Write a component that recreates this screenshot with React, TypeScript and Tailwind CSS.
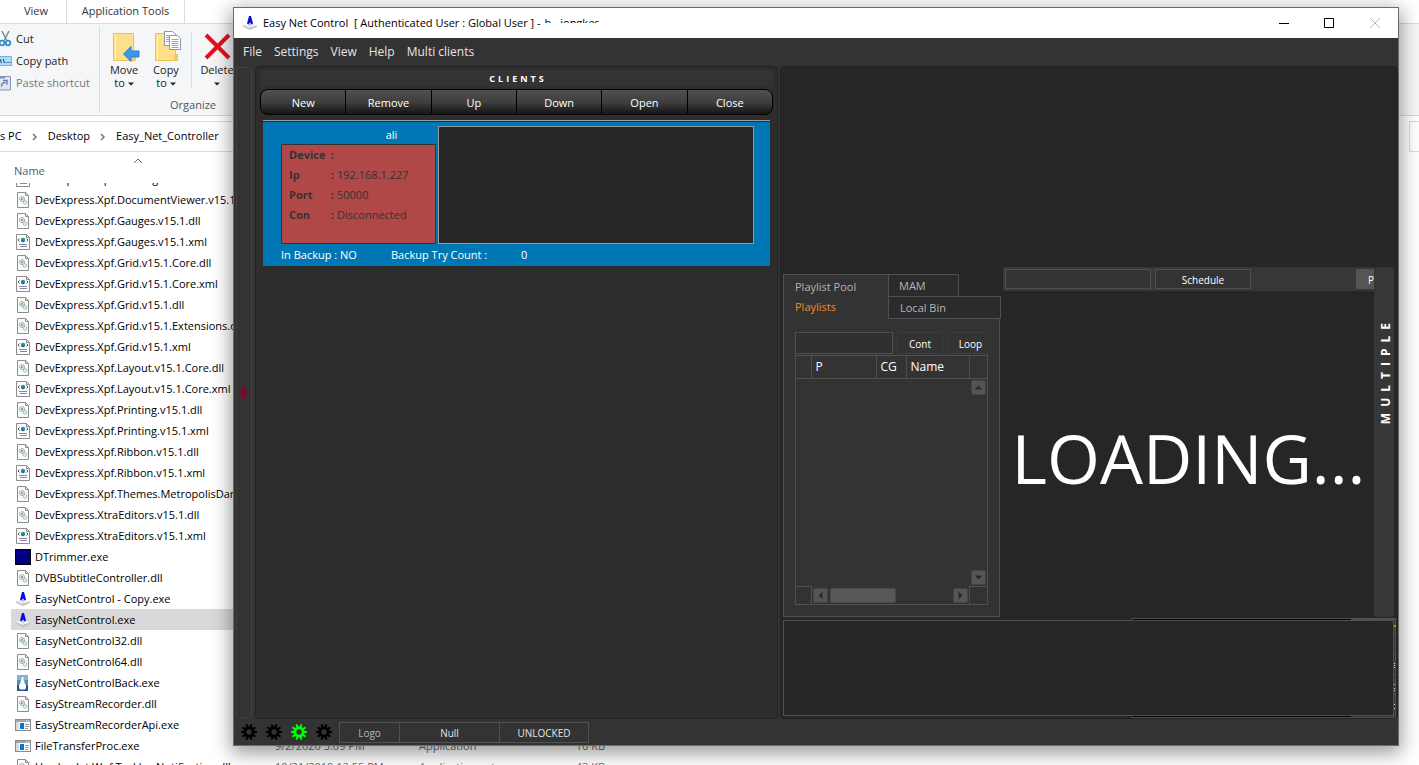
import type { ReactNode } from 'react'

type FileKind = 'dll' | 'xml' | 'trimmer' | 'cone' | 'backup' | 'app'

interface FileEntry {
  name: string
  kind: FileKind
  selected?: boolean
  date?: string
  type?: string
  size?: string
}

const files: FileEntry[] = [
  { name: 'DevExpress.Xpf.Docking.v15.1.xml', kind: 'xml' },
  { name: 'DevExpress.Xpf.DocumentViewer.v15.1.Core.dll', kind: 'dll' },
  { name: 'DevExpress.Xpf.Gauges.v15.1.dll', kind: 'dll' },
  { name: 'DevExpress.Xpf.Gauges.v15.1.xml', kind: 'xml' },
  { name: 'DevExpress.Xpf.Grid.v15.1.Core.dll', kind: 'dll' },
  { name: 'DevExpress.Xpf.Grid.v15.1.Core.xml', kind: 'xml' },
  { name: 'DevExpress.Xpf.Grid.v15.1.dll', kind: 'dll' },
  { name: 'DevExpress.Xpf.Grid.v15.1.Extensions.dll', kind: 'dll' },
  { name: 'DevExpress.Xpf.Grid.v15.1.xml', kind: 'xml' },
  { name: 'DevExpress.Xpf.Layout.v15.1.Core.dll', kind: 'dll' },
  { name: 'DevExpress.Xpf.Layout.v15.1.Core.xml', kind: 'xml' },
  { name: 'DevExpress.Xpf.Printing.v15.1.dll', kind: 'dll' },
  { name: 'DevExpress.Xpf.Printing.v15.1.xml', kind: 'xml' },
  { name: 'DevExpress.Xpf.Ribbon.v15.1.dll', kind: 'dll' },
  { name: 'DevExpress.Xpf.Ribbon.v15.1.xml', kind: 'xml' },
  { name: 'DevExpress.Xpf.Themes.MetropolisDark.v15.1.dll', kind: 'dll' },
  { name: 'DevExpress.XtraEditors.v15.1.dll', kind: 'dll' },
  { name: 'DevExpress.XtraEditors.v15.1.xml', kind: 'xml' },
  { name: 'DTrimmer.exe', kind: 'trimmer' },
  { name: 'DVBSubtitleController.dll', kind: 'dll' },
  { name: 'EasyNetControl - Copy.exe', kind: 'cone' },
  { name: 'EasyNetControl.exe', kind: 'cone', selected: true },
  { name: 'EasyNetControl32.dll', kind: 'dll' },
  { name: 'EasyNetControl64.dll', kind: 'dll' },
  { name: 'EasyNetControlBack.exe', kind: 'backup' },
  { name: 'EasyStreamRecorder.dll', kind: 'dll' },
  { name: 'EasyStreamRecorderApi.exe', kind: 'app' },
  {
    name: 'FileTransferProc.exe',
    kind: 'app',
    date: '9/2/2020 3:09 PM',
    type: 'Application',
    size: '16 KB',
  },
  {
    name: 'Hardcodet.Wpf.TaskbarNotification.dll',
    kind: 'dll',
    date: '10/21/2019 12:55 PM',
    type: 'Application ext...',
    size: '43 KB',
  },
]

function ConeIcon() {
  return (
    <svg width="16" height="16" viewBox="0 0 16 16" className="shrink-0">
      <path d="M0.500 10 6 8l9.500 2.500L8 14.500z" fill="#efefef" />
      <path d="M0.500 10 7 13l8.500-2.500-1 1.500L8 15 1.500 12z" fill="#bdbdbd" />
      <path d="M7 1h2l2 7.500-1.500 1H6.500l-1.500-1z" fill="#0a0ae6" />
      <path d="M6.500 9.500 8 7.500l1.500 2z" fill="#f7f7f7" />
      <path d="M7.500 9.500h1v4h-1z" fill="#d8d8d8" />
    </svg>
  )
}

function FileIcon({ kind }: { kind: FileKind }) {
  if (kind === 'cone') return <ConeIcon />
  if (kind === 'trimmer') {
    return (
      <svg width="16" height="16" viewBox="0 0 16 16" className="shrink-0">
        <rect x=".5" y=".5" width="15" height="15" fill="#000080" stroke="#000" />
      </svg>
    )
  }
  if (kind === 'backup') {
    return (
      <svg width="16" height="16" viewBox="0 0 16 16" className="shrink-0">
        <rect x="2" width="11" height="6" fill="#7db6d3" />
        <rect x="2" y="5" width="11" height="6" fill="#4f8db5" />
        <rect x="2" y="10" width="11" height="6" fill="#24588a" />
        <path d="M6.500 2h2v3l1 1v2l1.500 2v3l-1 1.500H5L4 13v-3l1.500-2V6l1-1z" fill="#fff" />
      </svg>
    )
  }
  if (kind === 'app') {
    return (
      <svg width="16" height="16" viewBox="0 0 16 16" className="shrink-0">
        <rect x=".5" y="2.500" width="15" height="11" fill="#fff" stroke="#8a8a8a" />
        <path d="M1 3h14v2H1z" fill="#a5a5a5" />
        <path d="M1 5h3v8H1z" fill="#d9d9d9" />
        <path d="M5 6h4v6H5z" fill="#0078d7" />
        <path d="M10 7.500h4M10 9.500h4M10 11.500h3" stroke="#9a9a9a" />
        <path d="M11 4h1M13 4h1" stroke="#fff" />
      </svg>
    )
  }
  if (kind === 'xml') {
    return (
      <svg width="16" height="16" viewBox="0 0 16 16" className="shrink-0">
        <path d="M1.500.5h10l3 3v12h-13z" fill="#fcfcfc" stroke="#8d8d8d" />
        <path d="M11.500.5v3h3" fill="none" stroke="#8d8d8d" />
        <path d="M4.500 4.500 3 6l1.500 1.500M11.500 4.500 13 6l-1.500 1.500" fill="none" stroke="#555" />
        <circle cx="8" cy="6" r="2.200" fill="#1f9b8d" />
        <path d="M6 6.500 8 8.200l2-1.700z" fill="#235a9c" />
        <path d="M4 10.500h8M5 12.500h7" stroke="#8c84a8" />
      </svg>
    )
  }
  return (
    <svg width="16" height="16" viewBox="0 0 16 16" className="shrink-0">
      <path d="M2.500.5h8l3 3v12h-11z" fill="#fcfcfc" stroke="#8d8d8d" />
      <path d="M10.500.5v3h3" fill="none" stroke="#8d8d8d" />
      <circle cx="7" cy="7" r="2.500" fill="#e8e8e8" stroke="#8f8f8f" strokeDasharray="1.500 .6" />
      <circle cx="7" cy="7" r=".9" fill="#777" />
      <circle cx="10" cy="10.500" r="2" fill="#d4e9f5" stroke="#7fb3d4" strokeDasharray="1.300 .6" />
    </svg>
  )
}

function Caret() {
  return (
    <svg width="6" height="4" viewBox="0 0 6 4" className="inline-block">
      <path d="M0 .5h6L3 3.500z" fill="#222" />
    </svg>
  )
}

function FolderIcon({ copy }: { copy?: boolean }) {
  return (
    <svg width="32" height="32" viewBox="-4 0 32 32">
      <path d="M1.500 2.500h20v21h2v6h-22z" fill="#ffe08a" stroke="#ecc455" />
      <path d="M3.500 3v26" stroke="#fff0bf" />
      <path d="M20 23.500h3.500v6H20z" fill="#f3cd5b" />
      {copy ? (
        <g fill="#fff" stroke="#8a98a8">
          <path d="M10.500.5h8l3 3v11h-11z" />
          <path d="M15.500 4.500h8l3 3v11h-11z" />
          <path
            d="M17.500 8.500h7M17.500 10.500h7M17.500 12.500h7M17.500 14.500h7M17.500 16.500h7M12 4.500h3M12 6.500h3M12 8.500h3M12 10.500h3"
            stroke="#7aa7dc"
          />
        </g>
      ) : (
        <path d="M11.500 23 19 15.500v4.500h8v6h-8v4.500z" fill="#3b97e8" stroke="#2d7fd0" />
      )}
    </svg>
  )
}

function BigAction({ icon, children }: { icon: ReactNode; children: ReactNode }) {
  return (
    <button className="flex w-[42px] flex-col items-center pt-[7px] text-[11px] leading-[13px] text-[#222]">
      {icon}
      <span className="text-center">{children}</span>
    </button>
  )
}

function Ribbon() {
  return (
    <div className="flex h-[92px] shrink-0 border-b border-[#d5d8db] bg-[#f5f6f7] text-[11px] text-[#222]">
      <div className="flex w-[99px] flex-col pt-1">
        <button className="flex h-[22px] items-center gap-1">
          <svg width="12" height="18" viewBox="0 0 12 18">
            <path d="M9 1 4 11M2 1l5 10" stroke="#7c8b97" strokeWidth="1.500" />
            <circle cx="2" cy="13" r="2.300" fill="none" stroke="#2b8fd0" strokeWidth="1.700" />
            <circle cx="8" cy="13" r="2.300" fill="none" stroke="#2b8fd0" strokeWidth="1.700" />
          </svg>
          Cut
        </button>
        <button className="flex h-[22px] items-center gap-1">
          <svg width="12" height="10" viewBox="0 0 12 10">
            <rect x="-4" y=".5" width="15.500" height="9" fill="#a9dcf9" stroke="#72b4dc" />
            <path d="M0 3l1.500 4M3 3l1.500 4M5.500 6.500h1M7.500 6.500h1M9.500 6.500h1" stroke="#174a6e" />
          </svg>
          Copy path
        </button>
        <button className="flex h-[22px] items-center gap-1 text-[#777]" disabled>
          <svg width="12" height="16" viewBox="0 0 12 16">
            <path d="M-4 1.500h14.500v13.500H-4z" fill="#dfe5f1" stroke="#8495b5" />
            <path d="M-1 1h6v2.500h-6z" fill="#8495b5" />
            <path d="M1.500 11.500c0-3 1-4 4-4M3 5.500h4v4" fill="none" stroke="#6c82ac" strokeWidth="1.500" />
          </svg>
          Paste shortcut
        </button>
      </div>
      <div className="my-0.5 w-px bg-[#dcdfe2]" />
      <div className="flex flex-col">
        <div className="flex h-[73px] pl-[3px]">
          <BigAction icon={<FolderIcon />}>
            Move
            <br />
            to <Caret />
          </BigAction>
          <BigAction icon={<FolderIcon copy />}>
            Copy
            <br />
            to <Caret />
          </BigAction>
          <div className="mx-1 mt-2 h-14 w-px bg-[#dcdfe2]" />
          <BigAction
            icon={
              <svg width="32" height="32" viewBox="0 0 32 32">
                <path d="M5 4l23 23M28 4 5 27" stroke="#e80f1c" strokeWidth="4" />
              </svg>
            }
          >
            Delete
            <br />
            <Caret />
          </BigAction>
        </div>
        <span className="pl-[70px] text-[#555]">Organize</span>
      </div>
    </div>
  )
}

function Chevron() {
  return (
    <svg width="6" height="8" viewBox="0 0 6 8" className="mx-2.5">
      <path d="M1 1l3 3-3 3" fill="none" stroke="#777" strokeWidth="1.500" />
    </svg>
  )
}

function Explorer() {
  return (
    <div className="flex h-full flex-col bg-white text-[11px] text-black">
      <div className="flex h-6 shrink-0 border-b border-[#dadbdc] text-[#333]">
        <button className="w-[67px] border-r border-[#dadbdc] pl-1.5">View</button>
        <button className="w-[118px] border-r border-[#dadbdc]">Application Tools</button>
      </div>
      <Ribbon />
      <div className="mt-[5px] flex h-[31px] shrink-0">
        <nav className="mr-3 flex flex-1 items-center border-y border-r border-[#d9d9d9]">
          <a href="#pc">s PC</a>
          <Chevron />
          <a href="#desktop">Desktop</a>
          <Chevron />
          <a href="#controller">Easy_Net_Controller</a>
        </nav>
        <div className="w-2.5 border-y border-l border-[#d9d9d9]" />
      </div>
      <div className="flex h-[31px] shrink-0 flex-col pl-3.5">
        <svg width="10" height="6" viewBox="0 0 10 6" className="mt-1.5 ml-[119px]">
          <path d="M1 5l4-4 4 4" fill="none" stroke="#666" />
        </svg>
        <span className="leading-[14px] text-[#44607f]">Name</span>
      </div>
      {/* File list, scrolled part way through a row */}
      <ul className="flex min-h-0 flex-1 flex-col overflow-hidden">
        {files.map((f, i) => (
          <li
            key={f.name}
            className={
              'ml-[11px] flex h-[21px] w-[640px] shrink-0 items-center pl-1 whitespace-nowrap ' +
              (f.selected ? 'bg-[#d9d9d9] ' : '') +
              (i === 0 ? '-mt-[15px]' : '')
            }
          >
            <FileIcon kind={f.kind} />
            <span className="w-[240px] pt-px pl-1">{f.name}</span>
            {f.date && (
              <>
                <span className="w-[144px] pt-px pl-1 text-[#6d6d6d]">{f.date}</span>
                <span className="w-[110px] pt-px pl-1 text-[#6d6d6d]">{f.type}</span>
                <span className="w-20 pt-px text-right text-[#6d6d6d]">{f.size}</span>
              </>
            )}
          </li>
        ))}
      </ul>
    </div>
  )
}

function TitleBar() {
  return (
    <div className="flex h-[30px] shrink-0 items-center bg-white pl-2 text-black">
      <ConeIcon />
      <h1 className="ml-[5px] flex gap-1 text-[11px] leading-4 whitespace-pre">
        <span>Easy Net Control  [ Authenticated User : Global User ] -</span>
        <span className="flex h-2 gap-1.5 overflow-hidden">
          <span>b.</span>
          <span>jongkes</span>
        </span>
      </h1>
      <div className="ml-auto flex">
        <button aria-label="Minimize" className="flex h-7 w-[45px] items-center justify-center">
          <svg width="10" height="10" viewBox="0 0 10 10">
            <path d="M0 5.500h10" stroke="#000" />
          </svg>
        </button>
        <button aria-label="Maximize" className="flex h-7 w-[45px] items-center justify-center">
          <svg width="10" height="10" viewBox="0 0 10 10">
            <path d="M.5.5h9v9h-9z" fill="none" stroke="#000" />
          </svg>
        </button>
        <button aria-label="Close window" className="flex h-7 w-[47px] items-center justify-center">
          <svg width="10" height="10" viewBox="0 0 10 10">
            <path d="M0 0l10 10M10 0 0 10" stroke="#bbb" />
          </svg>
        </button>
      </div>
    </div>
  )
}

const menus = ['File', 'Settings', 'View', 'Help', 'Multi clients']
const clientActions = ['New', 'Remove', 'Up', 'Down', 'Open', 'Close']
const details = [
  ['Device', ''],
  ['Ip', '192.168.1.227'],
  ['Port', '50000'],
  ['Con', 'Disconnected'],
]

function ClientsPanel() {
  return (
    <section className="flex w-[523px] shrink-0 flex-col rounded-sm border border-[#222] bg-[#2d2d2d] px-1 pt-[3px]">
      <h2 className="h-[17px] bg-[#333] pl-[3px] text-center text-[9px] leading-[17px] font-bold tracking-[3px] text-white">
        CLIENTS
      </h2>
      <div className="mt-0.5 flex h-[26px] overflow-hidden rounded-lg border border-black bg-black">
        {clientActions.map((label) => (
          <button
            key={label}
            className="flex-1 border-r border-black bg-linear-to-b from-[#505050] via-[#3f3f3f] to-[#161616] pt-0.5 text-[11px] text-white last:border-r-0"
          >
            {label}
          </button>
        ))}
      </div>
      <div className="mx-[3px] mt-[5px] border-t border-[#999] pt-px">
        <div className="bg-[#0077b5] text-[11px] text-white">
          <div className="flex pt-1 pr-4 pl-[18px]">
            <div className="w-[157px]">
              <p className="h-[18px] pl-16 text-center leading-[18px]">ali</p>
              <dl className="h-[100px] w-[155px] border border-[#333] bg-[#b04848] pl-[7px] text-[#333]">
                {details.map(([k, v]) => (
                  <div key={k} className="flex h-5 items-center">
                    <dt className="flex w-[45px] justify-between font-bold">
                      {k} <span>:</span>
                    </dt>
                    <dd className="pl-[3px]">{v}</dd>
                  </div>
                ))}
              </dl>
            </div>
            <div className="flex-1 border border-[#999] bg-[#262626]" />
          </div>
          <div className="flex h-[22px] items-center pl-[18px]">
            <span className="w-[110px]">In Backup : NO</span>
            <span className="w-[130px]">Backup Try Count :</span>
            <span>0</span>
          </div>
        </div>
      </div>
    </section>
  )
}

function ScrollArrow({ label, d }: { label: string; d: string }) {
  return (
    <button aria-label={label} className="h-[15px] w-[15px] shrink-0 rounded-xs border border-[#444] bg-[#555]">
      <svg width="13" height="13" viewBox="0 0 13 13">
        <path d={d} fill="#2b2b2b" />
      </svg>
    </button>
  )
}

function PlaylistPanel() {
  return (
    <section className="mt-[7px] flex w-[218px] shrink-0 flex-col text-[#b5b5b5]">
      <div className="flex h-[45px] text-[11px]">
        <div className="flex w-[105px] shrink-0 flex-col items-start border-t border-l border-[#505050] bg-[#333] pt-0.5 pl-[11px] leading-5">
          <button>Playlist Pool</button>
          <button className="text-[#f58a1f]">Playlists</button>
        </div>
        <div className="flex flex-1 flex-col">
          <button className="h-[22px] w-[71px] border-x border-t border-[#505050] bg-[#2b2b2b] pt-0.5 pl-2.5 text-left">
            MAM
          </button>
          <button className="h-[23px] border border-[#505050] bg-[#2b2b2b] pt-0.5 pl-[11px] text-left">Local Bin</button>
        </div>
      </div>
      <div className="mr-px flex flex-1 flex-col border-x border-b border-[#505050] bg-[#333] px-[11px] pt-[13px] pb-[11px]">
        <div className="flex h-[22px] overflow-hidden text-[10px] text-white">
          <input aria-label="Playlist filter" className="w-[98px] shrink-0 border border-[#505050] bg-[#2f2f2f] px-1" />
          <button className="ml-1 w-[46px] shrink-0 rounded-xs border border-[#3d3d3d] pt-0.5">Cont</button>
          <button className="ml-1 w-[47px] shrink-0 rounded-xs border border-[#3d3d3d] pt-0.5">Loop</button>
        </div>
        <div className="mt-px flex flex-1 flex-col border border-[#505050]">
          <table className="w-full table-fixed border-collapse text-left text-xs text-white">
            <thead>
              <tr className="h-[22px] border-b border-[#505050]">
                <th className="w-[15px] border-r border-[#505050]" />
                <th className="w-[65px] border-r border-[#505050] pl-1 font-normal">P</th>
                <th className="w-[30px] border-r border-[#505050] pl-1 font-normal">CG</th>
                <th className="border-r border-[#505050] pl-1 font-normal">Name</th>
                <th className="w-[18px]" />
              </tr>
            </thead>
          </table>
          <div className="flex flex-1 flex-col items-end justify-between p-px">
            <ScrollArrow label="Scroll up" d="M2.500 8.500h8l-4-4z" />
            <ScrollArrow label="Scroll down" d="M2.500 4.500h8l-4 4z" />
          </div>
          <div className="flex h-[18px] items-center">
            <div className="h-full w-4 border-t border-r border-[#505050]" />
            <div className="flex flex-1 items-center px-px">
              <ScrollArrow label="Scroll left" d="M8.500 2.500v8l-4-4z" />
              <div className="ml-0.5 h-[15px] w-[66px] rounded-xs border border-[#4a4a4a] bg-[#585858]" />
              <div className="flex-1" />
              <ScrollArrow label="Scroll right" d="M4.500 2.500v8l4-4z" />
            </div>
            <div className="h-full w-[18px] border-t border-l border-[#505050]" />
          </div>
        </div>
      </div>
    </section>
  )
}

function Workspace() {
  return (
    <section className="flex min-w-0 flex-1 flex-col rounded-sm border border-[#222] bg-[#262626]">
      <div className="h-[200px] shrink-0" />
      <div className="mb-px flex min-h-0 flex-1 pr-[3px] pl-0.5">
        <PlaylistPanel />
        <div className="ml-0.5 flex min-w-0 flex-1 flex-col">
          <div className="flex h-6 shrink-0 bg-[#373737] py-0.5 pl-0.5 text-[10px] text-white">
            <input aria-label="Schedule name" className="w-[146px] border border-[#505050] bg-[#333] px-1" />
            <button className="ml-1 w-24 border border-[#505050] bg-[#333] pt-0.5">Schedule</button>
            <button className="ml-auto w-[18px] overflow-hidden rounded-l-xs bg-[#555] pt-0.5 pl-3 text-left">P</button>
          </div>
          <p className="flex flex-1 items-center justify-center overflow-hidden pt-2 text-[68px] text-white">LOADING...</p>
        </div>
        <div className="flex w-5 shrink-0 items-start justify-center rounded-xs bg-[#373737] pt-[50px] pl-1">
          <button className="rotate-180 text-[12px] leading-4 font-bold tracking-[6px] text-white [writing-mode:vertical-rl]">
            MULTIPLE
          </button>
        </div>
      </div>
      {/* Preview strip, with the edges of the timeline panel behind it */}
      <div className="flex h-[100px] shrink-0 flex-col pr-px pl-0.5">
        <div className="flex h-0.5 justify-end">
          <div className="w-[220px] border-t border-l border-[#505050] bg-black" />
          <div className="w-[45px] bg-[#505050]" />
        </div>
        <div className="flex flex-1">
          <div className="flex-1 border border-[#505050]" />
          <svg width="2" height="96" viewBox="0 0 2 96" className="bg-[#333]">
            <path d="M1.500 0v96" stroke="#505050" />
            <path d="M0 6h1.500" stroke="#f58a1f" strokeWidth="2" />
            <path d="M0 9.500h1.500" stroke="#2c6b1c" />
            <path d="M0 13.500h1M0 34.500h1M0 54.500h1M0 74.500h1" stroke="#606060" />
            <path
              d="M0 43.500h1M0 45.500h1M0 47.500h1M0 64.500h1M0 68.500h1M0 70.500h1M0 84.500h1M0 88.500h1"
              stroke="#ccc"
            />
          </svg>
        </div>
        <div className="flex h-0.5 justify-end">
          <div className="w-[220px] border-b border-l border-[#505050] bg-black" />
          <div className="w-[45px] border-b border-[#505050] bg-[#333]" />
        </div>
      </div>
    </section>
  )
}

const gearTeeth = [0, 36, 72, 108, 144, 180, 216, 252, 288, 324]

function Gear({ color }: { color: string }) {
  return (
    <svg width="16" height="16" viewBox="0 0 16 16">
      <circle cx="8" cy="8" r="4.200" fill="none" stroke={color} strokeWidth="3" />
      {gearTeeth.map((a) => (
        <rect key={a} x="7" y="0" width="2" height="3.500" fill={color} transform={`rotate(${a + 18} 8 8)`} />
      ))}
    </svg>
  )
}

function StatusBar() {
  return (
    <footer className="flex h-[26px] shrink-0 items-center pl-[7px] text-[10px] text-[#e5e5e5]">
      <div className="flex w-[98px] gap-[9px]">
        <Gear color="#000" />
        <Gear color="#000" />
        <Gear color="#00ff00" />
        <Gear color="#000" />
      </div>
      <button className="h-[21px] w-[61px] border border-[#505050] pt-0.5 text-[#b5b5b5]">Logo</button>
      <button className="h-[21px] w-[100px] border-y border-r border-[#505050] pt-0.5">Null</button>
      <button className="h-[21px] w-[89px] border-y border-r border-[#505050] pt-0.5">UNLOCKED</button>
    </footer>
  )
}

function ControlWindow() {
  return (
    <main className="absolute top-[7px] right-[20px] bottom-[19px] left-[233px] flex flex-col border border-[#6b6b6b] bg-[#333] shadow-[0_5px_18px_2px_rgba(0,0,0,0.4)]">
      <TitleBar />
      <nav className="flex h-7 shrink-0 items-center gap-3 pl-[9px] text-[12px] text-[#e5e5e5]">
        {menus.map((m) => (
          <button key={m}>{m}</button>
        ))}
      </nav>
      <div className="flex min-h-0 flex-1">
        <div className="my-px mr-[3px] ml-0.5 flex w-4 shrink-0 items-center rounded-xs border border-[#404040] pl-1">
          <svg width="8" height="14" viewBox="0 0 8 14" className="shrink-0">
            <path d="M1 0l6 7-6 7z" fill="#8b0025" />
          </svg>
        </div>
        <ClientsPanel />
        <div className="w-0.5" />
        <Workspace />
      </div>
      <StatusBar />
    </main>
  )
}

export default function App() {
  return (
    <div className="relative h-screen overflow-hidden bg-white font-['Open_Sans','Noto_Sans',sans-serif]">
      <Explorer />
      <ControlWindow />
    </div>
  )
}
